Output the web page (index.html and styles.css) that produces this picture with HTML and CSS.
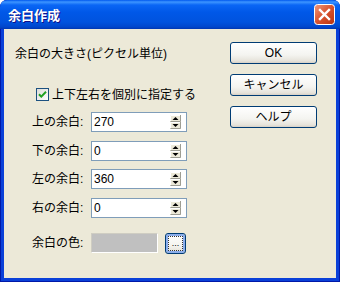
FILE: index.html
```html
<!DOCTYPE html>
<html lang="ja">
<head>
  <meta charset="UTF-8">
  <title>余白作成</title>
  <link rel="stylesheet" href="styles.css">
</head>
<body>
  <div class="window">
    <div class="titlebar">
      <span class="title">余白作成</span>
      <svg class="close" width="21" height="21" viewBox="0 0 21 21">
        <defs>
          <linearGradient id="cg" x1="0" y1="0" x2="1" y2="1">
            <stop offset="0" stop-color="#EE9A7E"/>
            <stop offset="0.5" stop-color="#D8522E"/>
            <stop offset="1" stop-color="#B8330F"/>
          </linearGradient>
        </defs>
        <rect x="0.5" y="0.5" width="20" height="20" rx="3" fill="url(#cg)" stroke="#fff"/>
        <path d="M6 6L15 15M15 6L6 15" stroke="#fff" stroke-width="2.4" stroke-linecap="square"/>
      </svg>
    </div>

    <div class="client">
      <div class="left">
        <div class="heading">余白の大きさ(ピクセル単位)</div>

        <label class="check-row">
          <svg class="checkbox" width="13" height="13" viewBox="0 0 13 13">
            <defs>
              <linearGradient id="bg" x1="0" y1="0" x2="1" y2="1">
                <stop offset="0" stop-color="#DCDCD7"/>
                <stop offset="1" stop-color="#FFFFFF"/>
              </linearGradient>
            </defs>
            <rect x="0.5" y="0.5" width="12" height="12" fill="url(#bg)" stroke="#1C5180"/>
            <path d="M3 6.2L5.3 8.6L10 3.8" fill="none" stroke="#21A121" stroke-width="2"/>
          </svg>
          <span>上下左右を個別に指定する</span>
        </label>

        <div class="fields">
          <div class="field">
            <span class="label">上の余白:</span>
            <div class="spin">
              <span class="value">270</span>
              <svg class="arrows" width="11" height="14" viewBox="0 0 11 14">
                <rect width="11" height="14" fill="#ECE9D8"/>
                <path d="M0.5 6V0.5H10" fill="none" stroke="#fff"/>
                <path d="M0.5 6.5H10.5V0" fill="none" stroke="#9D9D92"/>
                <path d="M0.5 13V7.5H10" fill="none" stroke="#fff"/>
                <path d="M0.5 13.5H10.5V7" fill="none" stroke="#9D9D92"/>
                <polygon points="5.5,2 8.5,5 2.5,5" fill="#000"/>
                <polygon points="2.5,9 8.5,9 5.5,12" fill="#000"/>
              </svg>
            </div>
          </div>
          <div class="field">
            <span class="label">下の余白:</span>
            <div class="spin">
              <span class="value">0</span>
              <svg class="arrows" width="11" height="14" viewBox="0 0 11 14">
                <rect width="11" height="14" fill="#ECE9D8"/>
                <path d="M0.5 6V0.5H10" fill="none" stroke="#fff"/>
                <path d="M0.5 6.5H10.5V0" fill="none" stroke="#9D9D92"/>
                <path d="M0.5 13V7.5H10" fill="none" stroke="#fff"/>
                <path d="M0.5 13.5H10.5V7" fill="none" stroke="#9D9D92"/>
                <polygon points="5.5,2 8.5,5 2.5,5" fill="#000"/>
                <polygon points="2.5,9 8.5,9 5.5,12" fill="#000"/>
              </svg>
            </div>
          </div>
          <div class="field">
            <span class="label">左の余白:</span>
            <div class="spin">
              <span class="value">360</span>
              <svg class="arrows" width="11" height="14" viewBox="0 0 11 14">
                <rect width="11" height="14" fill="#ECE9D8"/>
                <path d="M0.5 6V0.5H10" fill="none" stroke="#fff"/>
                <path d="M0.5 6.5H10.5V0" fill="none" stroke="#9D9D92"/>
                <path d="M0.5 13V7.5H10" fill="none" stroke="#fff"/>
                <path d="M0.5 13.5H10.5V7" fill="none" stroke="#9D9D92"/>
                <polygon points="5.5,2 8.5,5 2.5,5" fill="#000"/>
                <polygon points="2.5,9 8.5,9 5.5,12" fill="#000"/>
              </svg>
            </div>
          </div>
          <div class="field">
            <span class="label">右の余白:</span>
            <div class="spin">
              <span class="value">0</span>
              <svg class="arrows" width="11" height="14" viewBox="0 0 11 14">
                <rect width="11" height="14" fill="#ECE9D8"/>
                <path d="M0.5 6V0.5H10" fill="none" stroke="#fff"/>
                <path d="M0.5 6.5H10.5V0" fill="none" stroke="#9D9D92"/>
                <path d="M0.5 13V7.5H10" fill="none" stroke="#fff"/>
                <path d="M0.5 13.5H10.5V7" fill="none" stroke="#9D9D92"/>
                <polygon points="5.5,2 8.5,5 2.5,5" fill="#000"/>
                <polygon points="2.5,9 8.5,9 5.5,12" fill="#000"/>
              </svg>
            </div>
          </div>
        </div>

        <div class="field color-row">
          <span class="label">余白の色:</span>
          <div class="swatch"></div>
          <button class="btn pick"><span class="focus">...</span></button>
        </div>
      </div>

      <div class="right">
        <button class="btn">OK</button>
        <button class="btn">キャンセル</button>
        <button class="btn">ヘルプ</button>
      </div>
    </div>
  </div>
</body>
</html>
```

FILE: styles.css
```css
* {
  box-sizing: border-box;
}
body {
  margin: 0;
  font-family: "Liberation Sans", "Noto Sans CJK JP", sans-serif;
  font-size: 12px;
  color: #000;
  background: #fff;
}
.window {
  width: 340px;
  height: 282px;
  display: flex;
  flex-direction: column;
  background: #0A40D8;
  border-radius: 7px 7px 0 0;
  box-shadow: inset 0 0 0 1px #0019A8;
  overflow: hidden;
}
.titlebar {
  height: 29px;
  flex: none;
  display: flex;
  align-items: center;
  padding: 0 5px 0 8px;
  background: linear-gradient(to bottom, #0058EE 0, #3D95FF 2px, #0A66F5 5px, #0058E8 12px, #0053DE 22px, #0046CC 27px, #0036B0 29px);
}
.title {
  flex: 1;
  color: #fff;
  font-weight: bold;
  font-size: 13px;
  text-shadow: 1px 1px #0F1089;
}
.close {
  display: block;
}
.client {
  flex: 1;
  margin: 0 4px 4px;
  background: #ECE9D8;
  display: flex;
}
.left {
  width: 216px;
  padding-left: 11px;
}
.heading {
  margin-top: 18px;
  height: 14px;
  line-height: 14px;
}
.check-row {
  display: flex;
  align-items: center;
  gap: 3px;
  margin: 27px 0 0 21px;
  height: 13px;
  line-height: 14px;
}
.checkbox {
  display: block;
}
.fields {
  display: flex;
  flex-direction: column;
  gap: 8.5px;
  margin-top: 11px;
}
.field {
  display: flex;
  align-items: center;
  height: 20px;
  padding-left: 17px;
}
.label {
  width: 59px;
  line-height: 14px;
}
.spin {
  width: 96px;
  height: 20px;
  display: flex;
  align-items: center;
  padding: 0 5px 0 2px;
  background: #fff;
  border: 1px solid #7F9DB9;
}
.value {
  flex: 1;
  line-height: 14px;
}
.arrows {
  display: block;
}
.color-row {
  margin-top: 15.5px;
}
.swatch {
  width: 67px;
  height: 20px;
  background: #C0C0C0;
  border: 1px solid #CFCDC2;
  border-right-color: #fff;
  border-bottom-color: #fff;
}
.btn {
  width: 87px;
  height: 22px;
  padding: 0;
  border: 1px solid #003C74;
  border-radius: 3px;
  background: linear-gradient(to bottom, #FFFFFF 0%, #F4F4F0 60%, #E6E3DA 90%, #D6D0C5 100%);
  font-family: "Liberation Sans", "Noto Sans CJK JP", sans-serif;
  font-size: 12px;
  color: #000;
  line-height: 14px;
}
.pick {
  width: 21px;
  height: 21px;
  margin-left: 7px;
  padding: 2px;
  box-shadow: inset 0 0 0 2px #8CAEEB;
  display: flex;
  align-items: stretch;
}
.focus {
  flex: 1;
  border: 1px dotted #333;
  font-size: 9px;
  line-height: 12px;
  text-align: center;
}
.right {
  display: flex;
  flex-direction: column;
  gap: 10px;
  padding-top: 13px;
  margin-left: 10px;
}
```
